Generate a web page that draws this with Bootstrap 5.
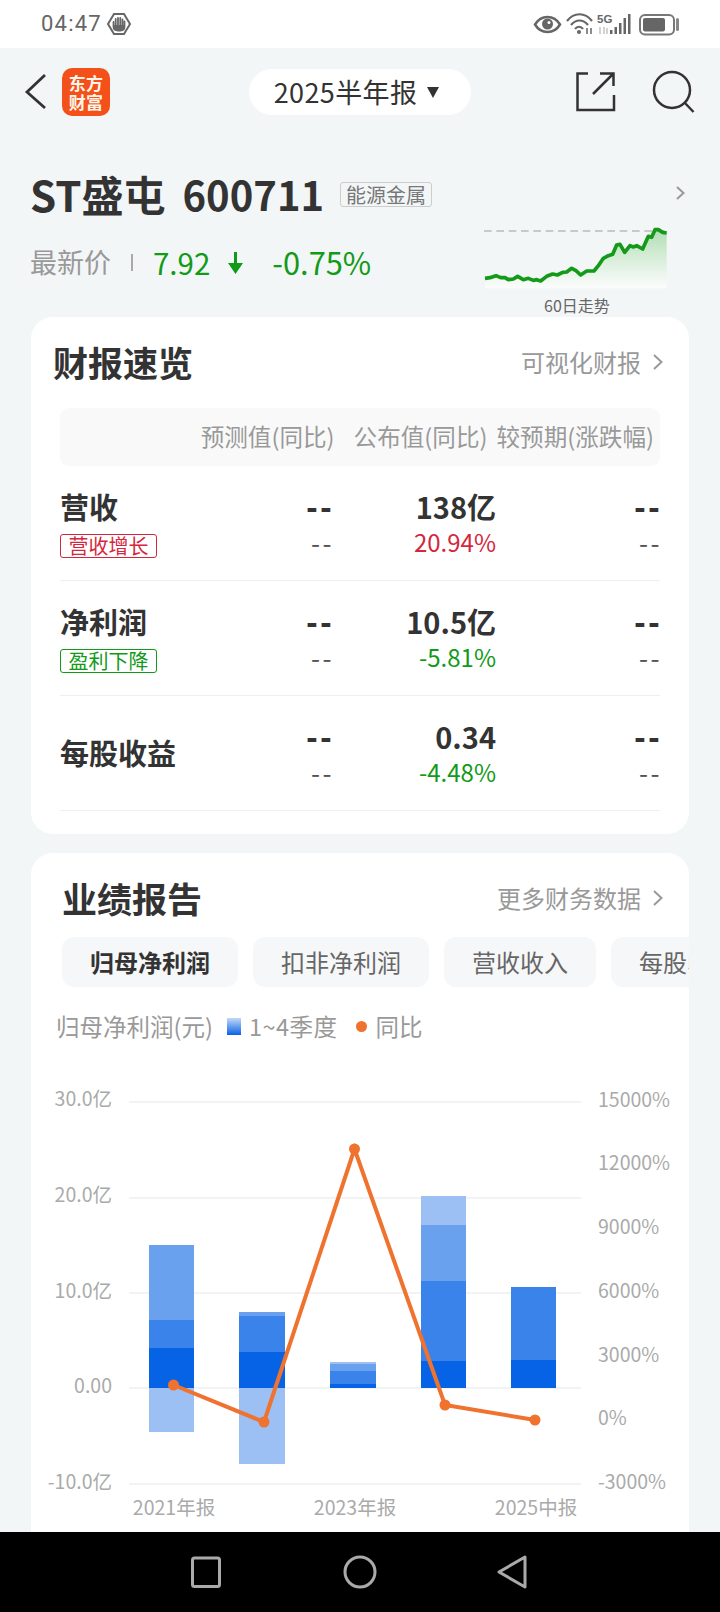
<!DOCTYPE html>
<html lang="zh-CN">
<head>
  <meta charset="UTF-8">
  <meta name="viewport" content="width=device-width, initial-scale=1.0">
  <title>ST盛屯 2025半年报</title>
  <link href="https://cdn.jsdelivr.net/npm/bootstrap@5.3.0/dist/css/bootstrap.min.css" rel="stylesheet">
  <style>
    body { width: 720px; height: 1612px; overflow: hidden; background: #f3f6f7; color: #333; font-family: "Noto Sans CJK SC", "Liberation Sans", sans-serif; }
    .status-bar { height: 48px; background: #fff; }
    .clock { font-family: Roboto, sans-serif; font-size: 22px; letter-spacing: 1.2px; color: #666; margin-left: 41px; line-height: 1; }
    .page-main { height: 1484px; overflow: hidden; }
    .top-bar { height: 48px; margin-top: 20px; padding: 0 24px; }
    .side-box { flex: 1 1 0; }
    .app-logo { width: 48px; height: 48px; border-radius: 10px; background: #f4511a; color: #fff6ea; font-size: 17px; font-weight: 700; line-height: 19px; margin-left: 14px; text-align: center; letter-spacing: .3px; }
    .period-pill { width: 222px; height: 46px; border-radius: 23px; background: #fff; font-size: 27px; letter-spacing: .4px; line-height: 46px; gap: 10px; padding-right: 7px; }
    .period-caret { width: 0; height: 0; border-left: 6.5px solid transparent; border-right: 6.5px solid transparent; border-top: 11px solid #333; }
    .stock-block { height: 147px; margin-top: 54px; padding: 0 31px 0 30px; }
    .stock-name { font-size: 42px; font-weight: 700; line-height: 48px; }
    .stock-code { font-size: 40px; margin-left: 17px; }
    .sector-tag { font-size: 20px; line-height: 23px; color: #777; border: 1px solid #ccc; border-radius: 3px; padding: 0 5px; margin-left: 16px; font-weight: 400; }
    .price-line { margin-top: 24px; height: 40px; }
    .price-label { font-size: 27px; color: #999; line-height: 40px; }
    .price-sep { width: 2px; height: 17px; background: #aaa; margin: 0 20px 0 20px; }
    .price-val { font-size: 29.5px; color: #129a18; line-height: 40px; }
    .price-arrow { margin: 2px 0 0 18px; }
    .price-pct { margin-left: 29px; font-size: 30.8px; }
    .spark-col { width: 205px; }
    .spark-caption { font-size: 16px; line-height: 20px; color: #666; margin: 6px 0 0 60px; }
    .sheet { background: #fff; border-radius: 22px; margin: 0 31px; }
    .sheet-one { height: 517px; }
    .sheet-two { height: 700px; margin-top: 19px; }
    .sheet-title { font-size: 35px; font-weight: 700; line-height: 46px; }
    .sheet-link { font-size: 24px; color: #999; line-height: 46px; }
    .link-chevron { margin-left: 12px; }
    .head-one { padding: 22px 26px 0 22px; }
    .head-two { padding: 22px 26px 0 31px; }
    .sum-head { height: 58px; margin: 23px 29px 0; background: #f9f9fa; border-radius: 9px; font-size: 23.6px; color: #999; padding-right: 6px; }
    .sum-row { height: 115px; margin: 0 29px; border-bottom: 1px solid #eeeff1; padding-top: 22px; }
    .cell-name { width: 108px; flex: none; white-space: nowrap; }
    .cell-num { width: 164px; flex: none; text-align: right; }
    .big-line { height: 36px; font-size: 29px; font-weight: 700; line-height: 36px; }
    .sub-line { height: 36px; font-size: 24px; line-height: 36px; color: #555; }
    .dash-big { font-family: "Liberation Sans", sans-serif; font-size: 34px; letter-spacing: 2.5px; margin-right: -2px; line-height: 1; }
    .dash-sub { font-size: 26px; letter-spacing: 2.5px; margin-right: -2px; }
    .trend-tag { display: block; width: 97px; height: 24px; margin-top: 10px; border: 1px solid; border-radius: 3px; font-size: 20px; line-height: 22px; text-align: center; font-weight: 400; }
    .tag-up { color: #d4273d; border-color: #d4273d; }
    .tag-down { color: #129a18; border-color: #129a18; }
    .val-up { color: #d4273d; }
    .val-down { color: #129a18; }
    .metric-tabs { margin-top: 16px; padding-left: 31px; gap: 15px; overflow: hidden; }
    .metric-tab { flex: none; height: 50px; padding: 0 28px; background: #f6f7f9; border-radius: 12px; font-size: 24px; line-height: 50px; color: #666; }
    .metric-tab.on { color: #333; font-weight: 700; }
    .chart-legend { margin-top: 21px; padding-left: 25px; height: 36px; font-size: 23.5px; color: #999; line-height: 36px; }
    .legend-swatch { width: 14px; height: 17px; background: linear-gradient(#c5d9f7, #0763e5); margin: 0 8px 0 14px; }
    .legend-range { letter-spacing: .5px; }
    .legend-dot { width: 11px; height: 11px; border-radius: 50%; background: #f0722f; margin: 0 9px 0 18px; }
    .chart-area { display: block; margin-top: 32px; }
    .chart-area text { font-size: 19.5px; fill: #aaa; font-family: "Noto Sans CJK SC", sans-serif; }
    .nav-bar { height: 80px; background: #000; }
  </style>
</head>
<body>
<div class="status-bar d-flex align-items-center">
  <span class="clock">04:47</span>
  <svg class="ms-1" width="26" height="24" viewBox="109 12 26 24">
    <path d="M117 14h10l6 10-6 10h-10l-6-10z" fill="none" stroke="#666" stroke-width="2"/>
    <path d="M116.500 22v4.500c0 2.500 2 4 4.500 4h2.500c2.500 0 4-1.500 4-4v-5M118.700 19v6M121 18v7M123.300 18v7M125.500 19.500v5.500" fill="none" stroke="#666" stroke-width="1.800" stroke-linecap="round"/>
    <path d="M117 25h10v3c0 1-1 2-3 2h-4c-2 0-3-1-3-2z" fill="#666"/>
  </svg>
  <svg class="ms-auto" width="200" height="48" viewBox="520 0 200 48">
    <path d="M535 24.500c6-10 19-10 25 0-6 10-19 10-25 0z" fill="none" stroke="#666" stroke-width="2.500"/>
    <circle cx="547.500" cy="24" r="5.500" fill="#666"/>
    <circle cx="549" cy="22.500" r="1.500" fill="#fff"/>
    <path d="M567 21c7-9 18-9 25 0M571 25c5-6 12-6 17 0M575 29c2-3 6-3 8 0" fill="none" stroke="#666" stroke-width="2.200"/>
    <circle cx="579" cy="32" r="2" fill="#666"/>
    <path d="M587 28v6M591 28v6" stroke="#666" stroke-width="1.500"/>
    <text x="597" y="23" font-size="11.500" font-weight="700" fill="#666" font-family="Liberation Sans">5G</text>
    <path d="M600 27v7M604 27v7M607 28v6" stroke="#c4c4c4" stroke-width="1.500"/>
    <path d="M610 30h2.500v4H610zM614.500 27h2.500v7h-2.500zM619 23h2.500v11H619zM623.500 18h2.500v16h-2.500zM628 14h2.500v20H628z" fill="#666"/>
    <rect x="640" y="15" width="34" height="19.500" rx="5" fill="none" stroke="#777" stroke-width="2"/>
    <rect x="643" y="18" width="22" height="13.500" rx="2" fill="#666"/>
    <rect x="676" y="18" width="3" height="13" rx="1.500" fill="#888"/>
  </svg>
</div>

<div class="page-main">
  <div class="top-bar d-flex align-items-center">
    <div class="side-box d-flex align-items-center">
      <svg width="24" height="40" viewBox="24 72 24 40"><path d="M45 75 27 92l18 16" fill="none" stroke="#333" stroke-width="2.800"/></svg>
      <div class="app-logo d-flex flex-column justify-content-center"><span>东方</span><span>财富</span></div>
    </div>
    <div class="period-pill d-flex align-items-center justify-content-center"><span>2025半年报</span><span class="period-caret"></span></div>
    <div class="side-box d-flex align-items-center justify-content-end">
      <svg width="40" height="40" viewBox="576 72 40 40"><path d="M588 73.500H577.500V110H614V95M600 73.500h13.500V86M593 94l20-20" fill="none" stroke="#333" stroke-width="2.500"/></svg>
      <svg class="search-ico" width="44" height="44" viewBox="652 70 44 44" style="margin-left:36px"><circle cx="672" cy="90" r="18" fill="none" stroke="#333" stroke-width="2.500"/><path d="M685 103l8.500 9" fill="none" stroke="#333" stroke-width="2.500"/></svg>
    </div>
  </div>

  <div class="stock-block d-flex justify-content-between">
    <div>
      <div class="stock-name d-flex align-items-center"><span>ST盛屯</span><span class="stock-code">600711</span><span class="sector-tag">能源金属</span></div>
      <div class="price-line d-flex align-items-center">
        <span class="price-label">最新价</span><span class="price-sep"></span><span class="price-val">7.92</span>
        <svg class="price-arrow" width="15" height="22" viewBox="0 0 15 22"><path d="M6 0h3v11h6L7.500 22 0 11h6z" fill="#129a18"/></svg>
        <span class="price-val price-pct">-0.75%</span>
      </div>
    </div>
    <div class="spark-col d-flex flex-column">
      <svg class="align-self-end mt-3 me-1" width="9" height="14" viewBox="0 0 9 14"><path d="M1 1l6.500 6L1 13" fill="none" stroke="#999" stroke-width="2"/></svg>
      <svg style="margin-top:24px" width="184" height="65" viewBox="42 165 552 195">
        <defs><linearGradient id="sparkFill" x1="0" y1="0" x2="0" y2="1"><stop offset="0" stop-color="#9fd79f" stop-opacity=".8"/><stop offset="1" stop-color="#fff" stop-opacity=".7"/></linearGradient></defs>
        <path d="M45 328L60 326 78 320 92 326 105 326 115 332 130 330 143 322 160 332 175 328 190 334 200 332 212 336 230 322 248 315 262 318 278 310 290 309 305 298 318 305 332 318 350 306 372 306 385 290 400 268 415 260 428 256 440 228 450 226 464 250 480 230 490 234 500 230 518 240 535 202 545 205 555 182 565 182 578 190 590 192V358H45z" fill="url(#sparkFill)"/>
        <path d="M42 186H594" stroke="#bbb" stroke-width="5" stroke-dasharray="23 14" fill="none"/>
        <path d="M45 328L60 326 78 320 92 326 105 326 115 332 130 330 143 322 160 332 175 328 190 334 200 332 212 336 230 322 248 315 262 318 278 310 290 309 305 298 318 305 332 318 350 306 372 306 385 290 400 268 415 260 428 256 440 228 450 226 464 250 480 230 490 234 500 230 518 240 535 202 545 205 555 182 565 182 578 190 590 192" fill="none" stroke="#129a18" stroke-width="11" stroke-linejoin="round"/>
      </svg>
      <span class="spark-caption">60日走势</span>
    </div>
  </div>

  <section class="sheet sheet-one">
    <div class="head-one d-flex justify-content-between align-items-center">
      <span class="sheet-title">财报速览</span>
      <span class="sheet-link d-flex align-items-center">可视化财报<svg class="link-chevron" width="10" height="16" viewBox="0 0 10 16"><path d="M1 1l7.500 7L1 15" fill="none" stroke="#999" stroke-width="2"/></svg></span>
    </div>
    <div class="sum-head d-flex align-items-center justify-content-end">
      <span>预测值(同比)</span><span style="margin-left:19px">公布值(同比)</span><span style="margin-left:9px">较预期(涨跌幅)</span>
    </div>
    <div class="sum-row d-flex">
      <div class="cell-name"><div class="big-line">营收</div><span class="trend-tag tag-up">营收增长</span></div>
      <div class="cell-num"><div class="big-line"><span class="dash-big">--</span></div><div class="sub-line"><span class="dash-sub">--</span></div></div>
      <div class="cell-num"><div class="big-line">138亿</div><div class="sub-line val-up">20.94%</div></div>
      <div class="cell-num"><div class="big-line"><span class="dash-big">--</span></div><div class="sub-line"><span class="dash-sub">--</span></div></div>
    </div>
    <div class="sum-row d-flex">
      <div class="cell-name"><div class="big-line">净利润</div><span class="trend-tag tag-down">盈利下降</span></div>
      <div class="cell-num"><div class="big-line"><span class="dash-big">--</span></div><div class="sub-line"><span class="dash-sub">--</span></div></div>
      <div class="cell-num"><div class="big-line">10.5亿</div><div class="sub-line val-down">-5.81%</div></div>
      <div class="cell-num"><div class="big-line"><span class="dash-big">--</span></div><div class="sub-line"><span class="dash-sub">--</span></div></div>
    </div>
    <div class="sum-row d-flex">
      <div class="cell-name d-flex align-items-center mb-4"><div class="big-line">每股收益</div></div>
      <div class="cell-num"><div class="big-line"><span class="dash-big">--</span></div><div class="sub-line"><span class="dash-sub">--</span></div></div>
      <div class="cell-num"><div class="big-line">0.34</div><div class="sub-line val-down">-4.48%</div></div>
      <div class="cell-num"><div class="big-line"><span class="dash-big">--</span></div><div class="sub-line"><span class="dash-sub">--</span></div></div>
    </div>
  </section>

  <section class="sheet sheet-two">
    <div class="head-two d-flex justify-content-between align-items-center">
      <span class="sheet-title">业绩报告</span>
      <span class="sheet-link d-flex align-items-center">更多财务数据<svg class="link-chevron" width="10" height="16" viewBox="0 0 10 16"><path d="M1 1l7.500 7L1 15" fill="none" stroke="#999" stroke-width="2"/></svg></span>
    </div>
    <div class="metric-tabs d-flex">
      <span class="metric-tab on">归母净利润</span>
      <span class="metric-tab">扣非净利润</span>
      <span class="metric-tab">营收收入</span>
      <span class="metric-tab">每股收益</span>
    </div>
    <div class="chart-legend d-flex align-items-center">
      <span>归母净利润(元)</span><span class="legend-swatch"></span><span class="legend-range">1~4季度</span><span class="legend-dot"></span><span>同比</span>
    </div>
    <svg class="chart-area" width="658" height="457" viewBox="31 1075 658 457">
      <g stroke="#f2f3f5" stroke-width="2">
        <path d="M129 1101H581M129 1197H581M129 1292H581M129 1387H581M129 1483H581"/>
      </g>
      <g text-anchor="end">
        <text x="112" y="1105">30.0亿</text><text x="112" y="1201">20.0亿</text><text x="112" y="1297">10.0亿</text><text x="112" y="1392">0.00</text><text x="112" y="1488">-10.0亿</text>
      </g>
      <g>
        <text x="598" y="1106">15000%</text><text x="598" y="1169">12000%</text><text x="598" y="1233">9000%</text><text x="598" y="1297">6000%</text><text x="598" y="1361">3000%</text><text x="598" y="1424">0%</text><text x="598" y="1488">-3000%</text>
      </g>
      <g text-anchor="middle">
        <text x="174" y="1514">2021年报</text><text x="355" y="1514">2023年报</text><text x="536" y="1514">2025中报</text>
      </g>
      <g fill="#6aa1ee">
        <rect x="149" y="1244" width="45" height="75"/><rect x="239" y="1311" width="46" height="4"/><rect x="330" y="1363" width="46" height="7"/><rect x="421" y="1224" width="45" height="56"/>
      </g>
      <g fill="#9cc0f4">
        <rect x="149" y="1387" width="45" height="44"/><rect x="239" y="1387" width="46" height="76"/><rect x="330" y="1361" width="46" height="2"/><rect x="421" y="1195" width="45" height="29"/>
      </g>
      <g fill="#3a83ea">
        <rect x="149" y="1319" width="45" height="28"/><rect x="239" y="1315" width="46" height="36"/><rect x="330" y="1370" width="46" height="13"/><rect x="421" y="1280" width="45" height="80"/><rect x="511" y="1286" width="45" height="73"/>
      </g>
      <g fill="#0763e5">
        <rect x="149" y="1347" width="45" height="40"/><rect x="239" y="1351" width="46" height="36"/><rect x="330" y="1383" width="46" height="4"/><rect x="421" y="1360" width="45" height="27"/><rect x="511" y="1359" width="45" height="28"/>
      </g>
      <path d="M173.500 1384L264 1421 354.500 1148 445 1404 535 1419" fill="none" stroke="#f0722f" stroke-width="4"/>
      <g fill="#f0722f">
        <circle cx="173.500" cy="1384" r="5.500"/><circle cx="264" cy="1421" r="5.500"/><circle cx="354.500" cy="1148" r="5.500"/><circle cx="445" cy="1404" r="5.500"/><circle cx="535" cy="1419" r="5.500"/>
      </g>
    </svg>
  </section>
</div>

<div class="nav-bar">
  <svg width="720" height="80" viewBox="0 1532 720 80">
    <rect x="192.500" y="1558" width="27" height="28.500" rx="2" fill="none" stroke="#aaa" stroke-width="3"/>
    <circle cx="360" cy="1572" r="15" fill="none" stroke="#aaa" stroke-width="3"/>
    <path d="M525 1557L499 1572 525 1587z" fill="none" stroke="#aaa" stroke-width="3" stroke-linejoin="round"/>
  </svg>
</div>
<script src="https://cdn.jsdelivr.net/npm/bootstrap@5.3.0/dist/js/bootstrap.bundle.min.js"></script>
</body>
</html>
